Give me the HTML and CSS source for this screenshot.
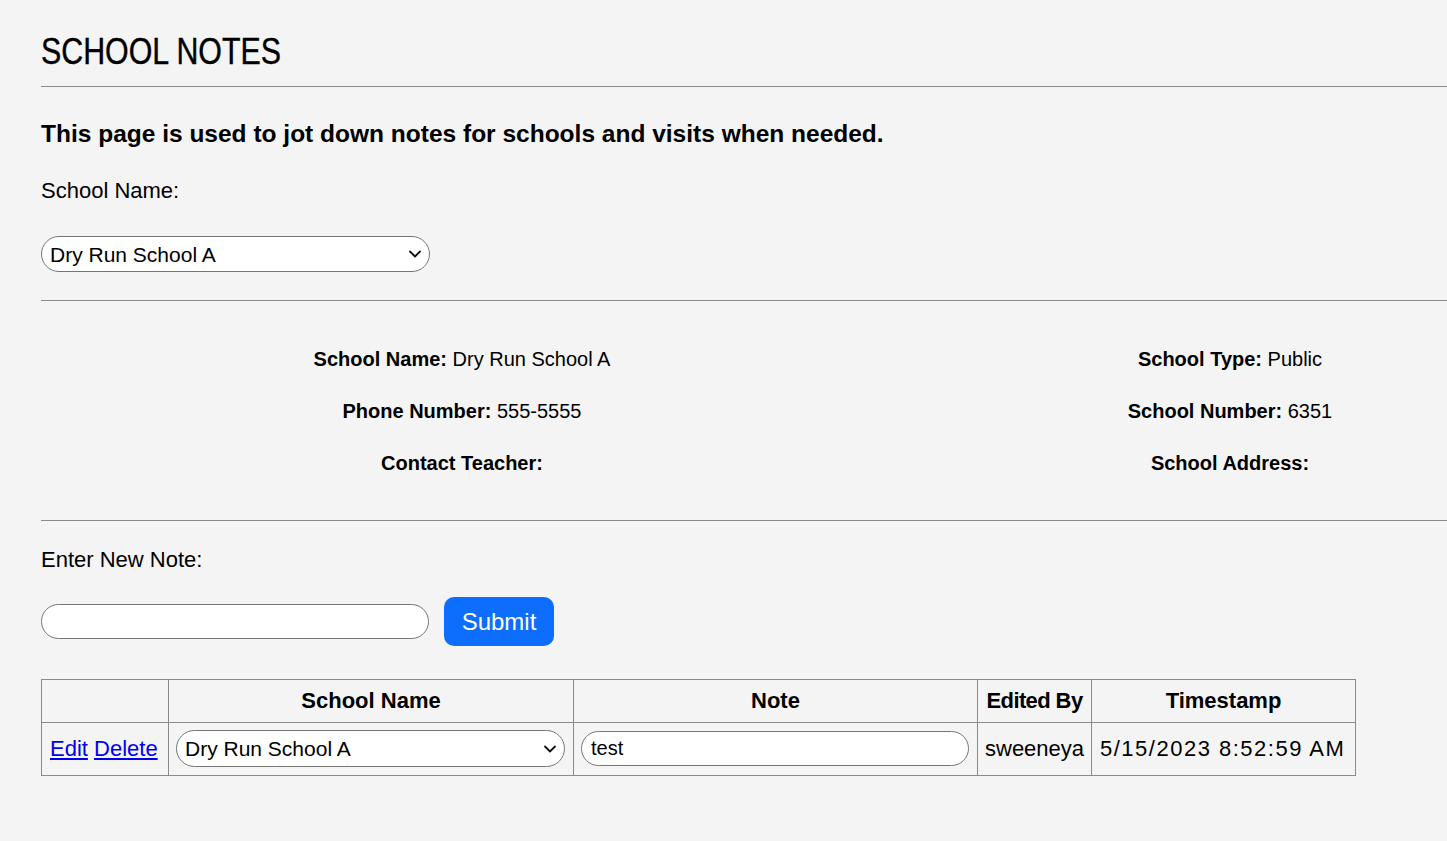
FILE: index.html
```html
<!DOCTYPE html>
<html lang="en">
<head>
<meta charset="utf-8">
<title>School Notes</title>
<link rel="stylesheet" href="styles.css">
</head>
<body>
<div class="page">
  <h1 class="title"><span class="title-text">SCHOOL NOTES</span></h1>
  <hr class="rule rule-top">
  <h2 class="intro">This page is used to jot down notes for schools and visits when needed.</h2>
  <div class="label">School Name:</div>
  <div class="select-wrap select-top">
    <select class="pill-select"><option>Dry Run School A</option></select>
    <svg class="chev" viewBox="0 0 12 8" width="12" height="8"><path d="M1 1.5 L6 6.5 L11 1.5" fill="none" stroke="#111" stroke-width="1.8" stroke-linecap="round" stroke-linejoin="round"/></svg>
  </div>
  <hr class="rule rule-mid">
  <div class="info">
    <div class="info-col info-left">
      <p class="info-row"><b>School Name:</b> Dry Run School A</p>
      <p class="info-row"><b>Phone Number:</b> 555-5555</p>
      <p class="info-row"><b>Contact Teacher:</b></p>
    </div>
    <div class="info-col info-right">
      <p class="info-row"><b>School Type:</b> Public</p>
      <p class="info-row"><b>School Number:</b> 6351</p>
      <p class="info-row"><b>School Address:</b></p>
    </div>
  </div>
  <hr class="rule rule-low">
  <div class="label label-note">Enter New Note:</div>
  <div class="note-row">
    <input class="pill-input note-input" type="text">
    <button class="submit" type="button">Submit</button>
  </div>
  <table class="notes">
    <colgroup>
      <col class="c-actions">
      <col class="c-school">
      <col class="c-note">
      <col class="c-editor">
      <col class="c-time">
    </colgroup>
    <thead>
      <tr>
        <th></th>
        <th>School Name</th>
        <th>Note</th>
        <th class="narrow">Edited By</th>
        <th>Timestamp</th>
      </tr>
    </thead>
    <tbody>
      <tr>
        <td class="actions"><a href="#">Edit</a> <a href="#">Delete</a></td>
        <td>
          <div class="select-wrap">
            <select class="pill-select cell-select"><option>Dry Run School A</option></select>
            <svg class="chev" viewBox="0 0 12 8" width="12" height="8"><path d="M1 1.5 L6 6.5 L11 1.5" fill="none" stroke="#111" stroke-width="1.8" stroke-linecap="round" stroke-linejoin="round"/></svg>
          </div>
        </td>
        <td><input class="pill-input cell-input" type="text" value="test"></td>
        <td class="plain">sweeneya</td>
        <td class="plain time">5/15/2023 8:52:59 AM</td>
      </tr>
    </tbody>
  </table>
</div>
</body>
</html>
```
FILE: styles.css
```css
html, body {
  margin: 0;
  padding: 0;
  background: #f4f4f4;
}
body {
  font-family: "Liberation Sans", Arial, sans-serif;
  color: #000;
  overflow: hidden;
}
.page {
  padding: 30px 0 40px 41px;
}
.title {
  margin: 0;
  font-size: 37px;
  line-height: 44px;
  font-weight: 400;
}
.title-text {
  display: inline-block;
  transform: scaleX(0.82);
  transform-origin: left center;
  -webkit-text-stroke: 0.4px #000;
}
.rule {
  border: 0;
  border-top: 1px solid #8a8a8a;
  margin: 0;
  height: 0;
}
.rule-top { margin-top: 12px; }
.intro {
  margin: 32px 0 0;
  font-size: 24.5px;
  line-height: 30px;
  font-weight: 700;
}
.label {
  margin-top: 29px;
  font-size: 22px;
  line-height: 26px;
}
.select-wrap {
  position: relative;
  display: inline-block;
}
.select-top {
  display: block;
  width: 389px;
  margin-top: 32px;
}
.pill-select {
  -webkit-appearance: none;
  appearance: none;
  width: 389px;
  height: 36px;
  box-sizing: border-box;
  border: 1px solid #767676;
  border-radius: 18px;
  background: #fff;
  font-family: "Liberation Sans", Arial, sans-serif;
  font-size: 21px;
  color: #000;
  padding: 0 30px 0 8px;
  margin: 0;
  display: block;
}
.chev {
  position: absolute;
  right: 9px;
  top: 50%;
  margin-top: -4px;
  pointer-events: none;
}
.rule-mid { margin-top: 28px; }
.info {
  display: flex;
  margin-top: 45px;
}
.info-col {
  text-align: center;
  font-size: 20px;
}
.info-left { width: 842px; }
.info-right {
  flex: 1;
  padding-left: 130px;
}
.info-row {
  margin: 0 0 26px;
  line-height: 26px;
}
.info-row:last-child { margin-bottom: 0; }
.rule-low { margin-top: 44px; }
.label-note { margin-top: 26px; }
.note-row {
  display: flex;
  align-items: center;
  gap: 15px;
  margin-top: 24px;
}
.pill-input {
  box-sizing: border-box;
  border: 1px solid #767676;
  background: #fff;
  font-family: "Liberation Sans", Arial, sans-serif;
  margin: 0;
  outline: none;
}
.note-input {
  width: 388px;
  height: 35px;
  border-radius: 17.5px;
  font-size: 20px;
  padding: 0 10px;
}
.submit {
  width: 110px;
  height: 49px;
  border: 0;
  border-radius: 10px;
  background: #0d6efd;
  color: #fff;
  font-family: "Liberation Sans", Arial, sans-serif;
  font-size: 24px;
  padding: 0;
}
.notes {
  margin-top: 33px;
  border-collapse: collapse;
  table-layout: fixed;
  width: 1315px;
  font-size: 22px;
}
.c-actions { width: 127px; }
.c-school { width: 405px; }
.c-note { width: 404px; }
.c-editor { width: 114px; }
.c-time { width: 264px; }
.notes th, .notes td {
  border: 1px solid #8a8a8a;
  padding: 8px 7px;
  line-height: 26px;
}
.notes th {
  font-weight: 700;
  text-align: center;
  white-space: nowrap;
}
.notes th.narrow {
  padding: 8px 2px;
  letter-spacing: -0.6px;
}
.notes td {
  vertical-align: middle;
  padding-top: 7px;
  padding-bottom: 8px;
}
.notes td.actions {
  padding-left: 8px;
  white-space: nowrap;
}
.actions a {
  color: #0000ee;
  text-decoration: underline;
}
.cell-select {
  width: 389px;
  height: 37px;
  border-radius: 18.5px;
}
.cell-input {
  width: 388px;
  height: 35px;
  border-radius: 17.5px;
  font-size: 20px;
  padding: 0 9px;
  display: block;
}
.notes td.plain {
  white-space: nowrap;
  text-align: left;
  padding-left: 7px;
  padding-right: 6px;
}
.notes td.time {
  padding-left: 8px;
  letter-spacing: 1.5px;
}
```
